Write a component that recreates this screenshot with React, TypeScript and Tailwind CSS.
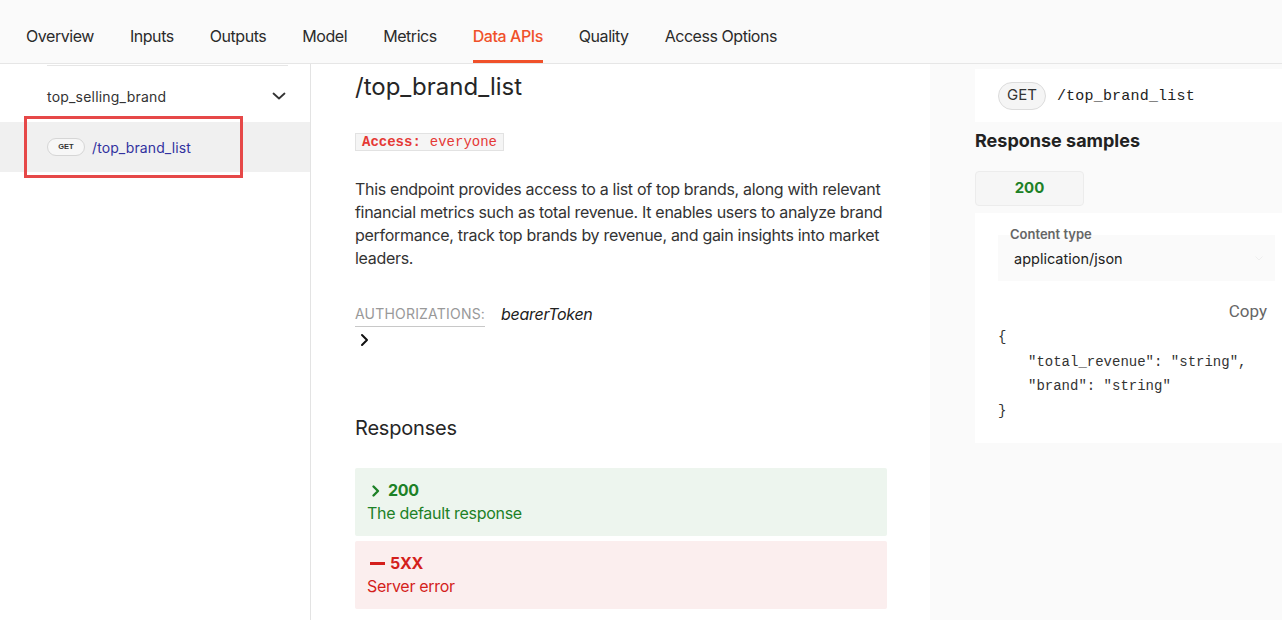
import React from "react";

const navItems = ["Overview", "Inputs", "Outputs", "Model", "Metrics", "Data APIs", "Quality", "Access Options"];

export default function App() {
  return (
    <div className="w-[1282px] h-[620px] overflow-hidden bg-white text-[#333] font-['Inter',_sans-serif] flex flex-col">
      {/* Header */}
      <div className="h-[64px] shrink-0 bg-[#fafafa] border-b border-[#e6e6e6] flex pl-[26px] gap-[36px]">
        {navItems.map((n) => (
          <div
            key={n}
            className={
              "h-[63px] pt-[24px] box-border border-b-[3px] text-[16px] leading-[24px] tracking-[-0.45px] " +
              (n === "Data APIs" ? "border-[#f0512a] text-[#f0512a] font-medium" : "border-transparent text-[#2b2b2b]")
            }
          >
            {n}
          </div>
        ))}
      </div>

      <div className="flex flex-1 min-h-0">
        {/* Sidebar */}
        <div className="w-[311px] shrink-0 border-r border-[#e3e3e3] relative">
          <div className="ml-[47px] w-[241px] mt-[1px] border-t border-[#e6e6e6]" />
          <div className="mt-[5px] h-[50px] flex items-center justify-between pl-[47px] pr-[23px] text-[14px] tracking-[0.2px]">
            <span>top_selling_brand</span>
            <svg width="16" height="16" viewBox="0 0 16 16" fill="none" stroke="#333" strokeWidth="1.8" strokeLinecap="round" strokeLinejoin="round">
              <path d="M2.5 5.5l5.5 5 5.5-5" />
            </svg>
          </div>
          <div className="mt-[1px] h-[50px] bg-[#f0f0f0] flex items-center pl-[47px]">
            <span className="w-[38px] h-[18px] rounded-full border border-[#d6d6d6] bg-[#f7f7f7] flex items-center justify-center text-[7.5px] font-bold text-[#333] font-['Liberation_Sans',_sans-serif]">
              GET
            </span>
            <span className="ml-[7px] text-[14px] tracking-[0.1px] text-[#32329f]">/top_brand_list</span>
          </div>
          <div className="absolute left-[24px] top-[52px] w-[219px] h-[62px] border-[3px] border-[#e64848] pointer-events-none" />
        </div>

        {/* Main */}
        <div className="w-[619px] shrink-0 pl-[44px] pt-[7px]">
          <h1 className="text-[24px] leading-[32px] font-normal text-[#262626]">/top_brand_list</h1>
          <div className="mt-[30px] inline-flex h-[18px] items-center border border-[#e2e2e2] bg-[#f5f5f5] px-[6px] font-['Liberation_Mono',_monospace] text-[14px] leading-[16px] text-[#e53935]">
            <span className="font-bold">Access:</span>
            <span className="ml-[9px]">everyone</span>
          </div>
          <p className="mt-[26px] w-[532px] text-[16px] leading-[23px] tracking-[-0.3px] text-[#333]">
            This endpoint provides access to a list of top brands, along with relevant financial metrics such as total revenue. It enables users to analyze brand performance, track top brands by revenue, and gain insights into market leaders.
          </p>
          <div className="mt-[33px] flex items-start">
            <span className="text-[14px] leading-[22px] tracking-[0.2px] text-[#999] border-b border-[#c8c8c8] pb-[1px]">AUTHORIZATIONS:</span>
            <span className="ml-[16px] text-[16px] leading-[22px] tracking-[-0.3px] italic text-[#222]">bearerToken</span>
          </div>
          <div className="mt-[6px] ml-[4px]">
            <svg width="12" height="14" viewBox="0 0 12 14" fill="none" stroke="#111" strokeWidth="2" strokeLinecap="round" strokeLinejoin="round">
              <path d="M3 2l5 5-5 5" />
            </svg>
          </div>
          <h2 className="mt-[67px] text-[20px] leading-[28px] tracking-[-0.2px] font-normal text-[#262626]">Responses</h2>
          <div className="mt-[26px] w-[532px] rounded-[2px] bg-[#edf5ee] pl-[12px] py-[11px] leading-[23px] tracking-[-0.3px]">
            <div className="flex items-center text-[16px] font-bold text-[#1d8127]">
              <svg className="ml-[4px] mr-[7px]" width="10" height="14" viewBox="0 0 10 14" fill="none" stroke="#1d8127" strokeWidth="2.4" strokeLinecap="round" strokeLinejoin="round">
                <path d="M2.5 2.5l4.5 4.5-4.5 4.5" />
              </svg>
              200
            </div>
            <div className="text-[16px] text-[#1d8127]">The default response</div>
          </div>
          <div className="mt-[5px] w-[532px] rounded-[2px] bg-[#fbeeee] pl-[12px] py-[11px] leading-[23px] tracking-[-0.3px]">
            <div className="flex items-center text-[16px] font-bold text-[#d41f1c]">
              <span className="ml-[3px] mr-[5px] inline-block w-[15px] h-[2.5px] bg-[#d41f1c]" />
              5XX
            </div>
            <div className="text-[16px] text-[#d41f1c]">Server error</div>
          </div>
        </div>

        {/* Right panel */}
        <div className="flex-1 bg-[#fafafa] pl-[45px] pt-[5px]">
          <div className="h-[53px] bg-white flex items-center pl-[23px]">
            <span className="h-[28px] px-[8px] rounded-full border border-[#dcdcdc] bg-[#f5f5f5] flex items-center text-[15px] text-[#333]">
              GET
            </span>
            <span className="ml-[11px] mt-[3px] font-['Liberation_Mono',_monospace] text-[15px] tracking-[0.2px] text-[#222]">/top_brand_list</span>
          </div>
          <div className="mt-[7px] text-[18px] leading-[24px] font-bold text-[#222]">Response samples</div>
          <div className="mt-[18px] w-[109px] h-[35px] rounded-[4px] border border-[#ececec] bg-[#f6f6f6] flex items-center justify-center text-[15px] font-bold text-[#1d8127]">
            200
          </div>
          <div className="mt-[7px] h-[230px] bg-white pl-[23px] pr-[7px] pt-[22px]">
            <div className="relative h-[46px] bg-[#fafafa] flex items-center pl-[16px] text-[14.5px] text-[#222]">
              <span className="absolute left-[12px] -top-[9px] text-[13px] leading-[16px] font-semibold text-[#666]">Content type</span>
              <span className="mt-[2px]">application/json</span>
              <svg className="absolute right-[10px] top-[17px]" width="12" height="12" viewBox="0 0 24 24" fill="none" stroke="#eee" strokeWidth="2">
                <path d="M5 9l7 7 7-7" />
              </svg>
            </div>
            <div className="mt-[19px] flex justify-end pr-[8px] text-[17px] leading-[22px] text-[#666] font-['Roboto',_sans-serif]">Copy</div>
            <div className="mt-[3px] font-['Liberation_Mono',_monospace] text-[14px] leading-[24.7px] text-[#333] whitespace-pre">
              <div>{"{"}</div>
              <div className="pl-[30px]">{'"total_revenue": "string",'}</div>
              <div className="pl-[30px]">{'"brand": "string"'}</div>
              <div>{"}"}</div>
            </div>
          </div>
        </div>
      </div>
    </div>
  );
}
